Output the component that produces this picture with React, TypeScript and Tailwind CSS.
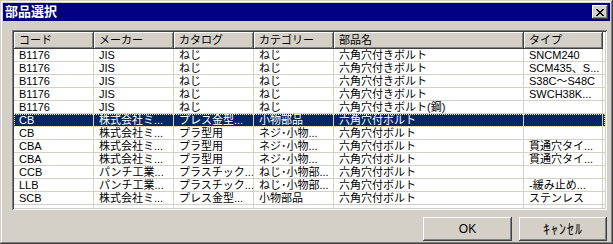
import React from 'react';

const font = { fontFamily: '"Liberation Sans", "Noto Sans CJK JP", sans-serif' };

const columns = ['コード', 'メーカー', 'カタログ', 'カテゴリー', '部品名', 'タイプ'];

const rows = [
  ['B1176', 'JIS', 'ねじ', 'ねじ', '六角穴付きボルト', 'SNCM240'],
  ['B1176', 'JIS', 'ねじ', 'ねじ', '六角穴付きボルト', 'SCM435、S...'],
  ['B1176', 'JIS', 'ねじ', 'ねじ', '六角穴付きボルト', 'S38C～S48C'],
  ['B1176', 'JIS', 'ねじ', 'ねじ', '六角穴付きボルト', 'SWCH38K...'],
  ['B1176', 'JIS', 'ねじ', 'ねじ', '六角穴付きボルト(鋼)', ''],
  ['CB', '株式会社ミ...', 'プレス金型...', '小物部品', '六角穴付ボルト', ''],
  ['CB', '株式会社ミ...', 'プラ型用', 'ネジ･小物...', '六角穴付ボルト', ''],
  ['CBA', '株式会社ミ...', 'プラ型用', 'ネジ･小物...', '六角穴付ボルト', '貫通穴タイ...'],
  ['CBA', '株式会社ミ...', 'プラ型用', 'ネジ･小物...', '六角穴付ボルト', '貫通穴タイ...'],
  ['CCB', 'パンチ工業...', 'プラスチック...', 'ねじ･小物部...', '六角穴付ボルト', ''],
  ['LLB', 'パンチ工業...', 'プラスチック...', 'ねじ･小物部...', '六角穴付ボルト', '-緩み止め...'],
  ['SCB', '株式会社ミ...', 'プレス金型...', '小物部品', '六角穴付ボルト', 'ステンレス'],
];

const selected = 5;
const cols = 'grid grid-cols-[80px_80px_80px_80px_190px_79px]';
const raised =
  'shadow-[inset_-1px_-1px_#404040,inset_1px_1px_#ffffff,inset_-2px_-2px_#808080,inset_2px_2px_#d4d0c8]';

function Button({ label, w, text }: { label: string; w: string; text: string }) {
  return (
    <button
      className={`${w} h-[24px] bg-[#d4d0c8] ${text} text-black flex items-center justify-center ${raised}`}
      style={font}
    >
      {label}
    </button>
  );
}

export default function App() {
  return (
    <div
      className="w-[613px] h-[244px] bg-[#d4d0c8] p-[3px] flex flex-col shadow-[inset_-1px_-1px_#404040,inset_1px_1px_#d4d0c8,inset_-2px_-2px_#808080,inset_2px_2px_#ffffff]"
      style={font}
    >
      {/* title bar */}
      <div className="h-[18px] bg-[#000080] flex items-center justify-between pl-[2px] pr-[2px]">
        <span className="text-white font-bold text-[13px] leading-[14px]">部品選択</span>
        <div className={`w-[16px] h-[14px] bg-[#d4d0c8] flex items-center justify-center ${raised}`}>
          <svg width="8" height="7" viewBox="0 0 8 7" shapeRendering="crispEdges">
            <path
              d="M0 0h2v1h-2zM6 0h2v1h-2zM1 1h2v1h-2zM5 1h2v1h-2zM2 2h4v1h-4zM3 3h2v1h-2zM2 4h4v1h-4zM1 5h2v1h-2zM5 5h2v1h-2zM0 6h2v1h-2zM6 6h2v1h-2z"
              fill="#000"
            />
          </svg>
        </div>
      </div>

      <div className="flex-1 flex flex-col pl-[9px] pr-[3px] pt-[9px]">
        {/* list view */}
        <div className="h-[180px] bg-white p-[2px] flex flex-col shadow-[inset_1px_1px_#808080,inset_-1px_-1px_#ffffff,inset_2px_2px_#404040,inset_-2px_-2px_#d4d0c8]">
          <div className={`${cols} h-[17px] shrink-0`}>
            {columns.map((c) => (
              <div
                key={c}
                className={`bg-[#d4d0c8] text-[11px] leading-[13px] text-black pl-[5px] flex items-center ${raised}`}
              >
                {c}
              </div>
            ))}
          </div>
          {rows.map((r, i) => (
            <div
              key={i}
              className={`${cols} h-[13px] shrink-0 border-b border-[#d4d0c8] ${
                i === selected
                  ? 'bg-[#0a246a] text-white outline outline-1 outline-dotted outline-[#f4eeb0] -outline-offset-1'
                  : 'text-black'
              }`}
            >
              {r.map((cell, j) => (
                <div
                  key={j}
                  className="border-r border-[#d4d0c8] text-[11px] leading-[12px] pl-[5px] whitespace-nowrap overflow-hidden"
                >
                  {cell}
                </div>
              ))}
            </div>
          ))}
          <div className={`${cols} flex-1`}>
            {columns.map((c) => (
              <div key={c} className="border-r border-[#d4d0c8]" />
            ))}
          </div>
        </div>

        {/* buttons */}
        <div className="flex justify-end gap-[7px] mt-[7px]">
          <Button label="OK" w="w-[89px]" text="text-[12px]" />
          <Button label="ｷｬﾝｾﾙ" w="w-[88px]" text="text-[14px] tracking-[1px]" />
        </div>
      </div>
    </div>
  );
}
